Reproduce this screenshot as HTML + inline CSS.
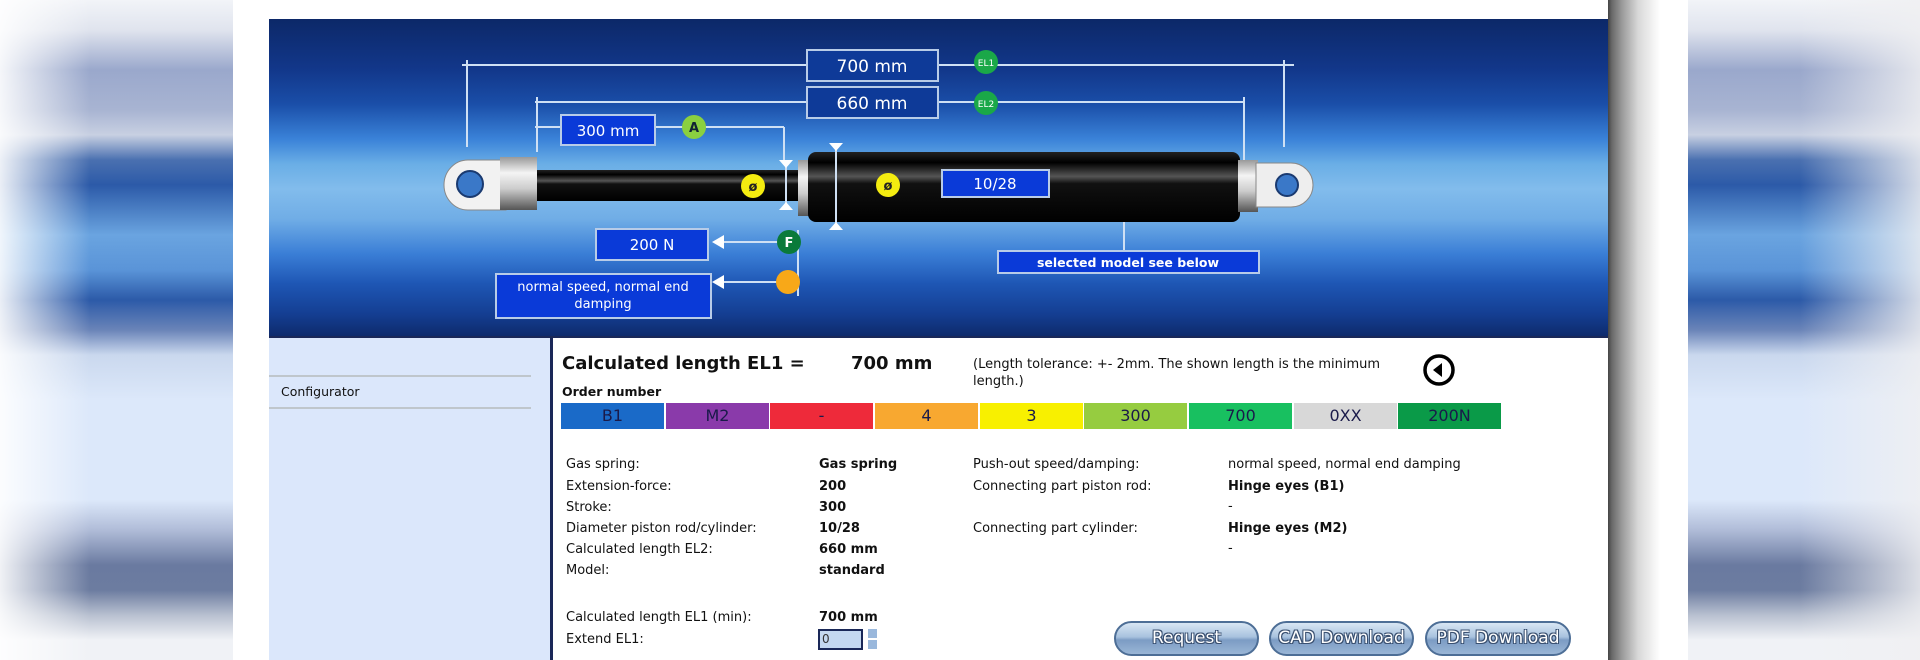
<!DOCTYPE html>
<html><head><meta charset="utf-8"><style>
*{margin:0;padding:0;box-sizing:border-box}
body{width:1920px;height:660px;overflow:hidden;position:relative;background:#fff;font-family:"DejaVu Sans","Liberation Sans",sans-serif}
.abs{position:absolute}
.bgL,.bgR{position:absolute;top:0;height:660px;background:linear-gradient(180deg,#f2f4f8 0px,#e0e4ee 30px,#9aa8cc 70px,#a8b4d2 110px,#c8d0e2 135px,#4a70b0 160px,#2c5aa8 185px,#6aa4e0 235px,#5a94d8 270px,#2c5aa8 300px,#6a84b8 330px,#cad8ee 355px,#dce8fa 400px,#dce8fa 500px,#b0bcd8 530px,#6a7aa0 565px,#6c7ca0 590px,#b8c0d0 615px,#f0f2f6 640px)}
.bgL{left:0;width:233px}
.bgR{left:1688px;width:232px}
.fadeL{position:absolute;left:0;top:0;width:90px;height:660px;background:linear-gradient(90deg,rgba(255,255,255,.9),rgba(255,255,255,0))}
.fadeR{position:absolute;left:1800px;top:0;width:120px;height:660px;background:linear-gradient(90deg,rgba(240,240,242,0),rgba(240,240,242,.85))}
.shadow{position:absolute;left:1608px;top:0;width:52px;height:660px;background:linear-gradient(90deg,#444 0,#6a6a6a 4px,#9a9a9a 14px,#d8d8d8 30px,#fff 52px)}
.banner{position:absolute;left:269px;top:19px;width:1339px;height:318px;background:linear-gradient(180deg,#0c2868 0px,#12378a 50px,#1a4ea8 85px,#3a82d8 120px,#6aaee6 145px,#82bcec 170px,#70ade6 200px,#3a7ed6 235px,#1e56b4 265px,#143e92 295px,#0e2a6a 318px)}
.side{position:absolute;left:269px;top:337px;width:281px;height:323px;background:#dbe7fb}
.sline{position:absolute;left:269px;width:262px;height:2px;background:#bfc6cc}
.vline{position:absolute;left:550px;top:337px;width:3px;height:323px;background:#1a2858}
.t{position:absolute;font-size:13px;color:#111;white-space:nowrap}
.b{font-weight:bold}
.seg{position:absolute;top:403px;height:26px;width:103px;text-align:center;font-size:16px;line-height:26px;color:#1a1a4a}
.btn{position:absolute;top:621px;height:35px;border-radius:18px;border:2px solid #4d6e96;background:linear-gradient(180deg,#d8e6f4 0%,#a8c2de 45%,#7c9cc4 55%,#9ab6d6 100%);color:#fff;font-size:17px;text-align:center;line-height:31px;text-shadow:-1px -1px 0 #3a5070,1px -1px 0 #3a5070,-1px 1px 0 #3a5070,1px 1px 0 #3a5070}
</style></head><body>
<div class="bgL"></div><div class="fadeL"></div>
<div class="bgR"></div><div class="fadeR"></div>
<div class="shadow"></div>
<div class="banner"></div>
<svg class="abs" style="left:0;top:0" width="1608" height="337" viewBox="0 0 1608 337" font-family="DejaVu Sans, Liberation Sans, sans-serif">
<defs>
<linearGradient id="blk" x1="0" y1="0" x2="0" y2="1"><stop offset="0" stop-color="#222"/><stop offset=".15" stop-color="#000"/><stop offset=".35" stop-color="#555"/><stop offset=".45" stop-color="#111"/><stop offset="1" stop-color="#000"/></linearGradient>
<linearGradient id="met" x1="0" y1="0" x2="0" y2="1"><stop offset="0" stop-color="#999"/><stop offset=".3" stop-color="#f4f4f4"/><stop offset=".6" stop-color="#ccc"/><stop offset="1" stop-color="#555"/></linearGradient>
</defs>
<g stroke="#cfe0f4" stroke-width="2" fill="none">
<line x1="462" y1="65" x2="1294" y2="65"/><line x1="467" y1="60" x2="467" y2="147"/><line x1="1284" y1="60" x2="1284" y2="147"/>
<line x1="535" y1="102" x2="1244" y2="102"/><line x1="537" y1="97" x2="537" y2="152"/><line x1="1244" y1="97" x2="1244" y2="160"/>
<line x1="535" y1="127" x2="784" y2="127"/><line x1="784" y1="127" x2="784" y2="160"/>
<line x1="786" y1="165" x2="786" y2="205"/><line x1="836" y1="145" x2="836" y2="228"/>
<line x1="1124" y1="190" x2="1124" y2="251"/>
<line x1="798" y1="230" x2="798" y2="296"/>
<line x1="720" y1="242" x2="780" y2="242"/><line x1="720" y1="282" x2="778" y2="282"/>
</g>
<g fill="#fff"><path d="M712 242l12-7v14z"/><path d="M712 282l12-7v14z"/>
<path d="M779 160h14l-7 8z"/><path d="M779 210h14l-7-8z"/><path d="M829 143h14l-7 8z"/><path d="M829 230h14l-7-8z"/></g>
<path d="M468 160h38v50h-38a24 25 0 0 1 0-50z" fill="#f2f2f2" stroke="#888"/>
<circle cx="470" cy="184" r="13" fill="#3a78c8" stroke="#1a3a70" stroke-width="2"/>
<rect x="500" y="157" width="37" height="53" fill="url(#met)"/>
<rect x="537" y="170" width="263" height="31" fill="url(#blk)"/>
<rect x="798" y="160" width="12" height="56" fill="url(#met)"/>
<rect x="808" y="152" width="432" height="70" rx="8" fill="url(#blk)"/>
<rect x="1238" y="160" width="20" height="52" fill="url(#met)"/>
<path d="M1256 163h35a22 22 0 0 1 0 44h-35z" fill="#eee" stroke="#888"/>
<circle cx="1287" cy="185" r="11" fill="#3a78c8" stroke="#1a3a70" stroke-width="2"/>
<g stroke="#cfe0f4" stroke-width="2"><line x1="836" y1="152" x2="836" y2="222"/><line x1="786" y1="170" x2="786" y2="201"/></g>
<g stroke="#b8cce8" stroke-width="2">
<rect x="807" y="50" width="131" height="31" fill="#0e3a98"/>
<rect x="807" y="87" width="131" height="31" fill="#0e3a98"/>
<rect x="561" y="115" width="94" height="30" fill="#0a3ad8"/>
<rect x="942" y="170" width="107" height="27" fill="#0a3ad8"/>
<rect x="998" y="251" width="261" height="22" fill="#0a3ad8"/>
<rect x="596" y="229" width="112" height="31" fill="#0a3ad8"/>
<rect x="496" y="274" width="215" height="44" fill="#0a3ad8"/>
</g>
<g fill="#fff" text-anchor="middle">
<text x="872" y="72" font-size="17">700 mm</text>
<text x="872" y="109" font-size="17">660 mm</text>
<text x="608" y="136" font-size="15">300 mm</text>
<text x="995" y="189" font-size="15">10/28</text>
<text x="1128" y="267" font-size="12.5" font-weight="bold">selected model see below</text>
<text x="652" y="250" font-size="15">200 N</text>
<text x="603" y="291" font-size="13">normal speed, normal end</text>
<text x="603" y="308" font-size="13">damping</text>
</g>
<circle cx="986" cy="62" r="12" fill="#1aa848"/><text x="986" y="66" font-size="9" fill="#fff" text-anchor="middle">EL1</text>
<circle cx="986" cy="103" r="12" fill="#1aa848"/><text x="986" y="107" font-size="9" fill="#fff" text-anchor="middle">EL2</text>
<circle cx="694" cy="127" r="12" fill="#8ad040"/><text x="694" y="132" font-size="13" font-weight="bold" fill="#123" text-anchor="middle">A</text>
<circle cx="753" cy="186" r="12" fill="#f4ec10"/><text x="753" y="191" font-size="13" font-weight="bold" fill="#222" text-anchor="middle">ø</text>
<circle cx="888" cy="185" r="12" fill="#f4ec10"/><text x="888" y="190" font-size="13" font-weight="bold" fill="#222" text-anchor="middle">ø</text>
<circle cx="789" cy="242" r="12" fill="#0a7a3a"/><text x="789" y="247" font-size="13" font-weight="bold" fill="#fff" text-anchor="middle">F</text>
<circle cx="788" cy="282" r="12" fill="#f8a818"/>
</svg>
<div class="side"></div>
<div class="sline" style="top:375px"></div>
<div class="sline" style="top:407px"></div>
<div class="t" style="left:281px;top:384px;font-size:12.5px">Configurator</div>
<div class="abs" style="left:269px;top:336px;width:1339px;height:2px;background:#1a2858"></div>
<div class="vline"></div>
<div class="t b" style="left:562px;top:353px;font-size:18px">Calculated length EL1 =</div>
<div class="t b" style="left:851px;top:353px;font-size:18px">700 mm</div>
<div class="t" style="left:973px;top:357px">(Length tolerance: +- 2mm. The shown length is the minimum</div>
<div class="t" style="left:973px;top:374px">length.)</div>
<svg class="abs" style="left:1421px;top:352px" width="36" height="36"><circle cx="18" cy="18" r="14" fill="#fff" stroke="#000" stroke-width="3.5"/><path d="M12 18l9-7v14z" fill="#000"/></svg>
<div class="t b" style="left:562px;top:384px;font-size:12.5px">Order number</div>
<div class="seg" style="left:561px;background:#1a6ac8">B1</div>
<div class="seg" style="left:666px;background:#8a3aaa">M2</div>
<div class="seg" style="left:770px;background:#ee2a3a">-</div>
<div class="seg" style="left:875px;background:#f8a830">4</div>
<div class="seg" style="left:980px;background:#f8f000">3</div>
<div class="seg" style="left:1084px;background:#96cc40">300</div>
<div class="seg" style="left:1189px;background:#18c060">700</div>
<div class="seg" style="left:1294px;background:#d8d8d8">0XX</div>
<div class="seg" style="left:1398px;background:#0a9a48">200N</div>
<div class="t" style="left:566px;top:457px">Gas spring:</div>
<div class="t" style="left:566px;top:479px">Extension-force:</div>
<div class="t" style="left:566px;top:500px">Stroke:</div>
<div class="t" style="left:566px;top:521px">Diameter piston rod/cylinder:</div>
<div class="t" style="left:566px;top:542px">Calculated length EL2:</div>
<div class="t" style="left:566px;top:563px">Model:</div>
<div class="t b" style="left:819px;top:457px">Gas spring</div>
<div class="t b" style="left:819px;top:479px">200</div>
<div class="t b" style="left:819px;top:500px">300</div>
<div class="t b" style="left:819px;top:521px">10/28</div>
<div class="t b" style="left:819px;top:542px">660 mm</div>
<div class="t b" style="left:819px;top:563px">standard</div>
<div class="t" style="left:973px;top:457px">Push-out speed/damping:</div>
<div class="t" style="left:973px;top:479px">Connecting part piston rod:</div>
<div class="t" style="left:973px;top:521px">Connecting part cylinder:</div>
<div class="t" style="left:1228px;top:457px">normal speed, normal end damping</div>
<div class="t b" style="left:1228px;top:479px">Hinge eyes (B1)</div>
<div class="t" style="left:1228px;top:499px">-</div>
<div class="t b" style="left:1228px;top:521px">Hinge eyes (M2)</div>
<div class="t" style="left:1228px;top:541px">-</div>
<div class="t" style="left:566px;top:610px">Calculated length EL1 (min):</div>
<div class="t b" style="left:819px;top:610px">700 mm</div>
<div class="t" style="left:566px;top:632px">Extend EL1:</div>
<div class="abs" style="left:818px;top:629px;width:45px;height:21px;border:2px solid #1a2858;background:#c4d8f0;font-size:12px;padding-left:2px;line-height:17px;color:#333">0</div>
<div class="abs" style="left:868px;top:629px;width:9px;height:9px;background:#9ab8dc"></div>
<div class="abs" style="left:868px;top:640px;width:9px;height:9px;background:#9ab8dc"></div>
<div class="btn" style="left:1114px;width:145px">Request</div>
<div class="btn" style="left:1269px;width:145px">CAD Download</div>
<div class="btn" style="left:1425px;width:146px">PDF Download</div>
</body></html>
